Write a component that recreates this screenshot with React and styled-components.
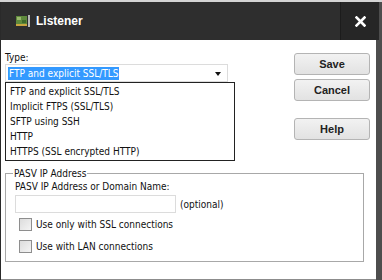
import styled, { createGlobalStyle } from "styled-components";

const GlobalStyle = createGlobalStyle`
  html, body {
    margin: 0;
    padding: 0;
    background: #d4d4d4;
  }
  body {
    font-family: "DejaVu Sans Condensed", "DejaVu Sans", sans-serif;
    font-size: 10px;
    color: #111;
  }
`;

const Frame = styled.div`
  width: 382px;
  height: 278px;
  margin-top: 2px;
  background: #4d4d4d;
  border-left: 1px solid #2a2a2a;
  box-sizing: border-box;
  display: flex;
  flex-direction: column;
`;

const TitleBar = styled.div`
  width: 378px;
  height: 38px;
  background: #2e2e2e;
  display: flex;
  align-items: center;
`;

const TitleIcon = styled.div`
  margin-left: 14px;
  width: 16px;
  height: 14px;
  display: flex;
`;

const TitleText = styled.span`
  margin-left: 5px;
  color: #fff;
  font-family: "Liberation Sans", Arial, sans-serif;
  font-weight: bold;
  font-size: 12px;
  flex: 1;
`;

const CloseButton = styled.div`
  width: 38px;
  height: 38px;
  background: #262626;
  border-left: 1px solid #1c1c1c;
  display: flex;
  align-items: center;
  justify-content: center;
`;

const Body = styled.div`
  width: 375px;
  flex: 1;
  background: #fff;
  border-bottom: 1px solid #8c8c8c;
  position: relative;
  padding: 12px 6px 0 4px;
  box-sizing: border-box;
`;

const TopRow = styled.div`
  display: flex;
  justify-content: space-between;
`;

const LeftCol = styled.div`
  width: 223px;
  display: flex;
  flex-direction: column;
  position: relative;
`;

const Label = styled.label`
  line-height: ${(p) => p.$lh || 13}px;
`;

const Select = styled.div`
  height: 18px;
  box-sizing: border-box;
  border: 1px solid #dcdcdc;
  display: flex;
  align-items: center;
  padding: 0 6px 0 2px;
  justify-content: space-between;
`;

const Highlight = styled.span`
  background: #3399ff;
  color: #fff;
  padding: 0 1px;
  line-height: 13px;
`;

const Arrow = styled.span`
  width: 0;
  height: 0;
  border-left: 3.5px solid transparent;
  border-right: 3.5px solid transparent;
  border-top: 4px solid #111;
  margin-top: 1px;
`;

const DropList = styled.ul`
  position: absolute;
  top: 30px;
  left: 0;
  width: 230px;
  margin: 0;
  padding: 1px 0 1px 4px;
  list-style: none;
  background: #fff;
  border: 1px solid #222;
  box-sizing: border-box;
  z-index: 2;
`;

const DropItem = styled.li`
  height: 15px;
  line-height: 15px;
`;

const ButtonCol = styled.div`
  width: 76px;
  display: flex;
  flex-direction: column;
  gap: 4px;
  padding-top: 1px;
`;

const Button = styled.button`
  height: 22px;
  margin-top: ${(p) => p.$offset || 0}px;
  border: 1px solid #b4b4b4;
  border-radius: 3px;
  background: linear-gradient(#f2f2f2, #e2e2e2);
  font-family: "Liberation Sans", Arial, sans-serif;
  font-size: 11px;
  font-weight: bold;
  color: #222;
  padding: 0;
`;

const GroupBox = styled.fieldset`
  margin: 27px 0 0 0;
  width: 359px;
  height: 95px;
  box-sizing: border-box;
  border: 1px solid #a8a8a8;
  padding: 0 0 0 9px;
`;

const Legend = styled.legend`
  padding: 0 1px;
  margin-left: -2px;
  line-height: 13px;
`;

const FieldRow = styled.div`
  display: flex;
  align-items: center;
  gap: 4px;
  margin-top: 2px;
`;

const TextInput = styled.div`
  width: 161px;
  height: 18px;
  border: 1px solid #dcdcdc;
  box-sizing: border-box;
`;

const CheckRow = styled.div`
  display: flex;
  align-items: center;
  gap: 4px;
  margin: ${(p) => p.$top}px 0 0 4px;
  line-height: 13px;
`;

const CheckBox = styled.span`
  width: 11px;
  height: 11px;
  border: 1px solid #8e8e8e;
  background: linear-gradient(135deg, #dcdcdc, #f4f4f4);
`;

function App() {
  const types = [
    "FTP and explicit SSL/TLS",
    "Implicit FTPS (SSL/TLS)",
    "SFTP using SSH",
    "HTTP",
    "HTTPS (SSL encrypted HTTP)",
  ];
  return (
    <>
      <GlobalStyle />
      <Frame>
        <TitleBar>
          <TitleIcon>
            <svg width="16" height="14" viewBox="0 0 16 14">
              <rect x="1" y="2" width="11" height="9" fill="#5f8a3c" />
              <rect x="2" y="3" width="4" height="3" fill="#9ab86e" />
              <rect x="7" y="6" width="4" height="3" fill="#3e6a2a" />
              <rect x="1" y="10" width="11" height="2" fill="#c9a640" />
              <rect x="13" y="1" width="2" height="12" fill="#b8b8b8" />
            </svg>
          </TitleIcon>
          <TitleText>Listener</TitleText>
          <CloseButton>
            <svg width="11" height="11" viewBox="0 0 11 11">
              <path d="M1.5 1.5 L9.5 9.5 M9.5 1.5 L1.5 9.5" stroke="#fff" strokeWidth="2.6" strokeLinecap="square" />
            </svg>
          </CloseButton>
        </TitleBar>
        <Body>
          <TopRow>
            <LeftCol>
              <Label $lh={12}>Type:</Label>
              <Select>
                <Highlight>FTP and explicit SSL/TLS</Highlight>
                <Arrow />
              </Select>
              <DropList>
                {types.map((t) => (
                  <DropItem key={t}>{t}</DropItem>
                ))}
              </DropList>
            </LeftCol>
            <ButtonCol>
              <Button>Save</Button>
              <Button>Cancel</Button>
              <Button $offset={13}>Help</Button>
            </ButtonCol>
          </TopRow>
          <GroupBox>
            <Legend>PASV IP Address</Legend>
            <Label>PASV IP Address or Domain Name:</Label>
            <FieldRow>
              <TextInput />
              <span>(optional)</span>
            </FieldRow>
            <CheckRow $top={5}>
              <CheckBox />
              <span>Use only with SSL connections</span>
            </CheckRow>
            <CheckRow $top={9}>
              <CheckBox />
              <span>Use with LAN connections</span>
            </CheckRow>
          </GroupBox>
        </Body>
      </Frame>
    </>
  );
}

export default App;
